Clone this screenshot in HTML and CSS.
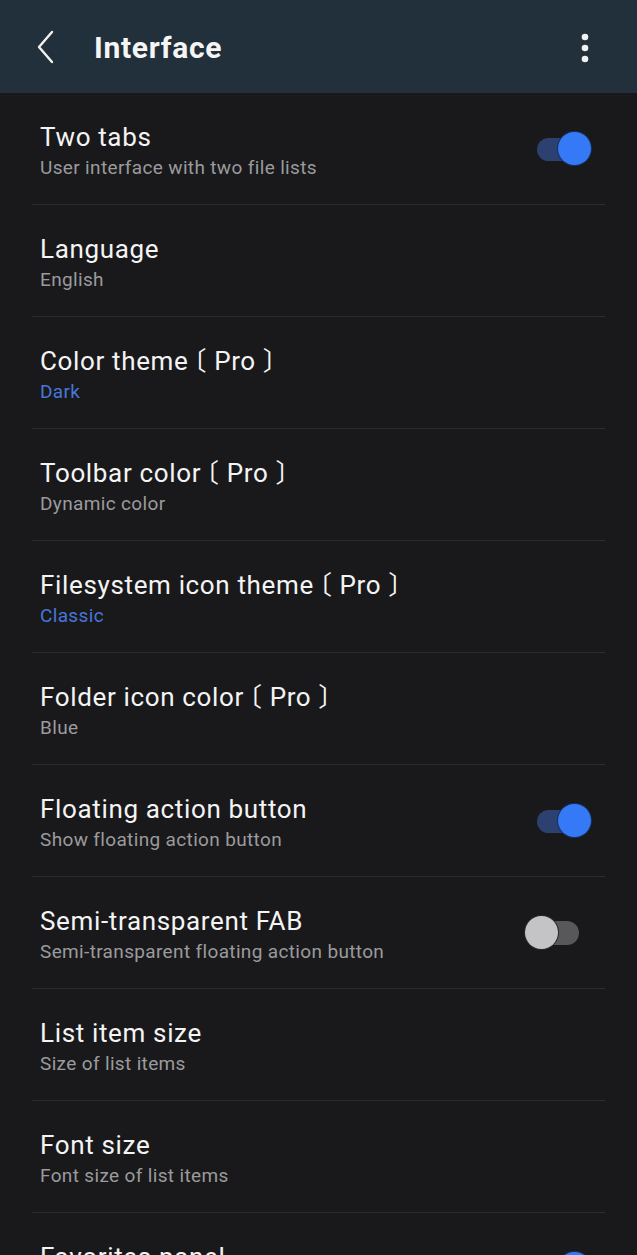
FILE: index.html
```html
<!DOCTYPE html>
<html>
<head>
<meta charset="utf-8">
<link rel="stylesheet" href="styles.css">
</head>
<body>
<header class="appbar">
  <svg class="back" width="20" height="34" viewBox="0 0 20 34"><path d="M16 2 L3 17 L16 32" fill="none" stroke="#f2f2f2" stroke-width="2.4" stroke-linecap="round" stroke-linejoin="round"/></svg>
  <h1 class="title">Interface</h1>
  <svg class="more" width="12" height="32" viewBox="0 0 12 32"><circle cx="6" cy="5" r="3.3" fill="#f2f2f2"/><circle cx="6" cy="16" r="3.3" fill="#f2f2f2"/><circle cx="6" cy="27" r="3.3" fill="#f2f2f2"/></svg>
</header>
<main class="list">
  <div class="row">
    <div class="text"><div class="t">Two tabs</div><div class="s">User interface with two file lists</div></div>
    <div class="switch on"><span class="track"></span><span class="thumb"></span></div>
  </div>
  <div class="row">
    <div class="text"><div class="t">Language</div><div class="s">English</div></div>
  </div>
  <div class="row">
    <div class="text"><div class="t">Color theme<span class="pro">〔 Pro 〕</span></div><div class="s blue">Dark</div></div>
  </div>
  <div class="row">
    <div class="text"><div class="t">Toolbar color<span class="pro">〔 Pro 〕</span></div><div class="s">Dynamic color</div></div>
  </div>
  <div class="row">
    <div class="text"><div class="t">Filesystem icon theme<span class="pro">〔 Pro 〕</span></div><div class="s blue">Classic</div></div>
  </div>
  <div class="row">
    <div class="text"><div class="t">Folder icon color<span class="pro">〔 Pro 〕</span></div><div class="s">Blue</div></div>
  </div>
  <div class="row">
    <div class="text"><div class="t">Floating action button</div><div class="s">Show floating action button</div></div>
    <div class="switch on"><span class="track"></span><span class="thumb"></span></div>
  </div>
  <div class="row">
    <div class="text"><div class="t">Semi-transparent FAB</div><div class="s">Semi-transparent floating action button</div></div>
    <div class="switch off"><span class="track"></span><span class="thumb"></span></div>
  </div>
  <div class="row">
    <div class="text"><div class="t">List item size</div><div class="s">Size of list items</div></div>
  </div>
  <div class="row">
    <div class="text"><div class="t">Font size</div><div class="s">Font size of list items</div></div>
  </div>
  <div class="row">
    <div class="text"><div class="t">Favorites panel</div><div class="s">Show favorites panel</div></div>
    <div class="switch on"><span class="track"></span><span class="thumb"></span></div>
  </div>
</main>
</body>
</html>
```
FILE: styles.css
```css
html, body {
  margin: 0;
  padding: 0;
  background: #19191b;
  height: 1255px;
  overflow: hidden;
}
body {
  font-family: Roboto, "Noto Sans", "Noto Sans CJK JP", sans-serif;
  color: #f2f2f2;
}
.appbar {
  height: 93px;
  background: #22303b;
  display: flex;
  align-items: center;
  padding: 0 0 0 36px;
  box-sizing: border-box;
}
.back {
  display: block;
  margin-top: 0;
}
.title {
  margin: 2px 0 0 38px;
  font-size: 30px;
  font-weight: 700;
  letter-spacing: 0.7px;
  flex: 1;
  color: #f5f5f5;
}
.more {
  display: block;
  margin-right: 46px;
  margin-top: 2px;
}
.list {
  display: flex;
  flex-direction: column;
}
.row {
  margin: 0 32px;
  padding: 0 8px;
  height: 112px;
  box-sizing: border-box;
  border-bottom: 1px solid #2c2c2f;
  display: flex;
  align-items: center;
  justify-content: space-between;
}
.text {
  display: flex;
  flex-direction: column;
  margin-top: 3px;
}
.t {
  font-size: 26px;
  line-height: 32px;
  letter-spacing: 0.65px;
  color: #f4f4f4;
  white-space: nowrap;
}
.pro {
  font-feature-settings: "halt" 1;
  letter-spacing: 0.6px;
  margin-left: 5px;
}
.s {
  font-size: 19px;
  line-height: 24px;
  letter-spacing: 0.35px;
  margin-top: 3px;
  color: #9b9b9d;
}
.s.blue {
  color: #4677d8;
}
.switch {
  position: relative;
  width: 54px;
  height: 34px;
  margin-right: 6px;
}
.track {
  position: absolute;
  top: 6px;
  height: 23px;
  border-radius: 12px;
}
.thumb {
  position: absolute;
  top: 0;
  width: 33px;
  height: 33px;
  border-radius: 50%;
}
.on .track {
  left: 0;
  width: 44px;
  background: #2c4170;
}
.on .thumb {
  right: 0;
  background: #3579f6;
  box-shadow: 0 0 0 1px #15315f;
}
.off .track {
  right: 12px;
  width: 48px;
  top: 5px;
  height: 24px;
  background: #58585a;
}
.off .thumb {
  left: -12px;
  background: #c4c4c6;
  box-shadow: 0 0 0 1px #2a2a2a;
}
```
